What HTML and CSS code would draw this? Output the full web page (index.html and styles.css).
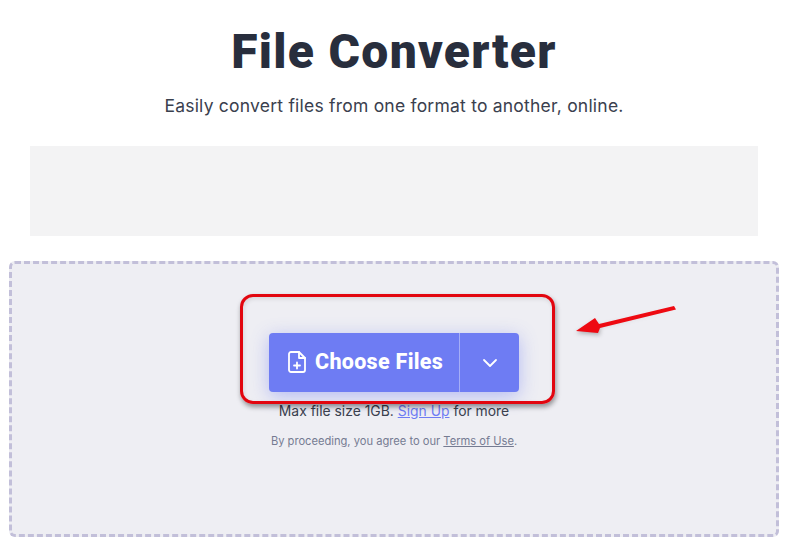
FILE: index.html
```html
<!DOCTYPE html>
<html lang="en">
<head>
<meta charset="utf-8">
<title>File Converter</title>
<link rel="stylesheet" href="styles.css">
</head>
<body>
<main class="page">
  <header class="hero">
    <h1 class="title">File Converter</h1>
    <p class="subtitle">Easily convert files from one format to another, online.</p>
  </header>
  <div class="ad"></div>
  <section class="dropzone">
    <div class="button">
      <div class="button-main">
        <svg class="file-icon" viewBox="0 0 20 24" width="20" height="24" fill="none" stroke="#fff" stroke-width="1.8" stroke-linejoin="round" stroke-linecap="round">
          <path d="M4 2h8l6 6v12a2 2 0 0 1-2 2H4a2 2 0 0 1-2-2V4a2 2 0 0 1 2-2z"/>
          <path d="M12 2v6h6"/>
          <path d="M10 12.5v6M7 15.5h6"/>
        </svg>
        <span class="button-label">Choose Files</span>
      </div>
      <div class="button-caret">
        <svg viewBox="0 0 16 10" width="16" height="10" fill="none" stroke="#fff" stroke-width="1.8" stroke-linecap="round" stroke-linejoin="round"><path d="M2 2l6 6 6-6"/></svg>
      </div>
    </div>
    <p class="limit">Max file size 1GB. <a class="signup" href="#">Sign Up</a> for more</p>
    <p class="terms">By proceeding, you agree to our <a class="terms-link" href="#">Terms of Use</a>.</p>
    <div class="highlight"></div>
    <svg class="arrow" viewBox="0 0 120 60" width="120" height="60">
      <path class="arrow-shadow" d="M113 19 L38 37 L38 45 L14 43 L33 31 L37 36 Z"/>
      <path class="arrow-body" d="M112 16 L114 19.5 L38 38 L36 43 L14 41 L33 28 L37 34 Z"/>
    </svg>
  </section>
</main>
</body>
</html>
```

FILE: styles.css
```css
* { box-sizing: border-box; }
html, body { margin: 0; padding: 0; background: #fff; }
body { width: 797px; height: 549px; overflow: hidden; font-family: "Inter", "Liberation Sans", sans-serif; color: #2a3040; }
.page { display: flex; flex-direction: column; padding: 0 18px 12px 9px; }
.hero { display: flex; flex-direction: column; align-items: center; padding-top: 26px; }
.title { margin: 0; font-family: "Roboto", "Liberation Sans", sans-serif; font-size: 48px; line-height: 52px; font-weight: 900; letter-spacing: 1.3px; color: #282e3d; }
.subtitle { margin: 14px 0 0; font-size: 17.5px; line-height: 28px; font-weight: 400; letter-spacing: .22px; color: #3a404e; }
.ad { margin: 26px 0 25px 21px; width: 728px; height: 90px; background: #f3f3f4; }
.dropzone { position: relative; display: flex; flex-direction: column; align-items: center; width: 770px; height: 276px; padding-top: 69px; background: #eeeef3; border: 3px dashed #c2bfd9; border-radius: 6px; }
.button { display: flex; width: 250px; height: 59px; background: #6e7cf3; border-radius: 4px; box-shadow: 0 4px 18px rgba(110,124,243,.45); color: #fff; }
.button-main { display: flex; align-items: center; gap: 8px; width: 191px; padding: 0 0 2px 18px; border-right: 1px solid #a5aef7; }
.file-icon { flex: none; }
.button-label { font-family: "Roboto", "Liberation Sans", sans-serif; font-size: 21.5px; font-weight: 800; letter-spacing: .3px; }
.button-caret { flex: 1; display: flex; align-items: center; justify-content: center; padding-top: 1px; }
.limit { margin: 9px 0 0; font-size: 13.9px; line-height: 20px; color: #3a404e; }
.signup { color: #6e7cf3; text-decoration: underline; }
.terms { margin: 11px 0 0; font-size: 11.15px; line-height: 18px; color: #757b92; }
.terms-link { color: #757b92; text-decoration: underline; }
.highlight { position: absolute; left: 228px; top: 30px; width: 315px; height: 110px; border: 3px solid #e2060f; border-radius: 13px; box-shadow: 1px 3px 5px rgba(0,0,0,.4), inset 1px 2px 4px rgba(0,0,0,.1); }
.arrow { position: absolute; left: 550px; top: 26px; }
.arrow-shadow { fill: rgba(0,0,0,.28); filter: blur(2px); }
.arrow-body { fill: #ee0a12; }
```
